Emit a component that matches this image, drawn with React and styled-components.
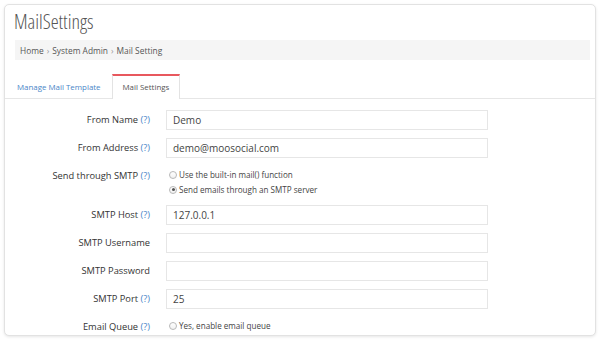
import React from "react";
import styled, { createGlobalStyle } from "styled-components";

const GlobalStyle = createGlobalStyle`
  html, body {
    margin: 0;
    padding: 0;
    background: #ffffff;
  }
  body {
    font-family: "Open Sans", "Noto Sans", sans-serif;
    color: #333;
  }
  * { box-sizing: border-box; }
`;

const Page = styled.div`
  padding: 4px 6px 5px 4px;
`;

const Card = styled.div`
  width: 592px;
  height: 332px;
  border: 1px solid #e2e2e2;
  border-radius: 5px;
  box-shadow: 0 1px 3px rgba(0, 0, 0, 0.1);
  background: #fff;
  overflow: hidden;
`;

const Header = styled.div`
  padding: 5px 5px 0 9px;
`;

const Title = styled.h1`
  margin: 0;
  font-family: "Open Sans", sans-serif;
  font-stretch: 75%;
  font-weight: 300;
  font-size: 20px;
  line-height: 24px;
  color: #555;
`;

const Breadcrumb = styled.div`
  margin: 6px 0 0 1px;
  height: 20px;
  background: #f5f5f5;
  padding-left: 5px;
  display: flex;
  align-items: center;
  gap: 3px;
  font-size: 8.4px;
  color: #555;
`;

const Sep = styled.span`
  color: #999;
`;

const TabBar = styled.div`
  margin-top: 14px;
  display: flex;
  align-items: flex-end;
  border-bottom: 1px solid #e6e6e6;
  height: 25px;
`;

const Tab = styled.div`
  height: 25px;
  margin-bottom: -1px;
  padding: 0 ${(p) => (p.$active ? "10px" : "10px 0 11px")};
  line-height: 23px;
  font-size: 7.9px;
  border-top: 2px solid ${(p) => (p.$active ? "#e8585e" : "transparent")};
  border-left: 1px solid ${(p) => (p.$active ? "#e3e3e3" : "transparent")};
  border-right: 1px solid ${(p) => (p.$active ? "#e3e3e3" : "transparent")};
  background: ${(p) => (p.$active ? "#fff" : "transparent")};
  color: ${(p) => (p.$active ? "#555" : "#4a86c8")};
  white-space: nowrap;
`;

const Form = styled.div`
  padding-top: 11px;
  display: grid;
  grid-template-columns: 145px 322px;
  column-gap: 16px;
  row-gap: 8px;
  align-items: start;
`;

const Label = styled.div`
  text-align: right;
  font-size: 9.3px;
  line-height: 20px;
  color: #333;
  white-space: nowrap;
`;

const Help = styled.span`
  color: #4a86c8;
`;

const Input = styled.div`
  height: 20px;
  border: 1px solid #e6e6e6;
  background: #fff;
  padding-left: 6px;
  display: flex;
  align-items: center;
  font-size: 10px;
  color: #444;
`;

const RadioGroup = styled.div`
  padding-top: 1px;
  padding-left: 3px;
  display: flex;
  flex-direction: column;
`;

const RadioLine = styled.div`
  height: 15px;
  display: flex;
  align-items: center;
  gap: 2px;
  font-size: 8.1px;
  color: #444;
  white-space: nowrap;
`;

const RadioDot = styled.span`
  width: 8px;
  height: 8px;
  border-radius: 50%;
  border: 1px solid #b8b8b8;
  background: linear-gradient(#ffffff, #f1f1f1);
  display: inline-flex;
  align-items: center;
  justify-content: center;
  flex-shrink: 0;
  &::after {
    content: "";
    width: 3px;
    height: 3px;
    border-radius: 50%;
    background: ${(p) => (p.$checked ? "#555" : "transparent")};
  }
`;

const Field = ({ label, help, value }) => (
  <>
    <Label>
      {label}
      {help && (
        <>
          {" "}
          <Help>(?)</Help>
        </>
      )}
    </Label>
    <Input>{value}</Input>
  </>
);

const RadioField = ({ label, options }) => (
  <>
    <Label>
      {label} <Help>(?)</Help>
    </Label>
    <RadioGroup>
      {options.map((o, i) => (
        <RadioLine key={i}>
          <RadioDot $checked={o.checked} />
          {o.text}
        </RadioLine>
      ))}
    </RadioGroup>
  </>
);

export default function App() {
  return (
    <>
      <GlobalStyle />
      <Page>
        <Card>
          <Header>
            <Title>MailSettings</Title>
            <Breadcrumb>
              <span>Home</span>
              <Sep>›</Sep>
              <span>System Admin</span>
              <Sep>›</Sep>
              <span>Mail Setting</span>
            </Breadcrumb>
          </Header>
          <TabBar>
            <Tab>Manage Mail Template</Tab>
            <Tab $active>Mail Settings</Tab>
          </TabBar>
          <Form>
            <Field label="From Name" help value="Demo" />
            <Field label="From Address" help value="demo@moosocial.com" />
            <RadioField
              label="Send through SMTP"
              options={[
                { text: "Use the built-in mail() function" },
                { text: "Send emails through an SMTP server", checked: true },
              ]}
            />
            <Field label="SMTP Host" help value="127.0.0.1" />
            <Field label="SMTP Username" value="" />
            <Field label="SMTP Password" value="" />
            <Field label="SMTP Port" help value="25" />
            <RadioField
              label="Email Queue"
              options={[
                { text: "Yes, enable email queue" },
                { text: "" },
              ]}
            />
          </Form>
        </Card>
      </Page>
    </>
  );
}
